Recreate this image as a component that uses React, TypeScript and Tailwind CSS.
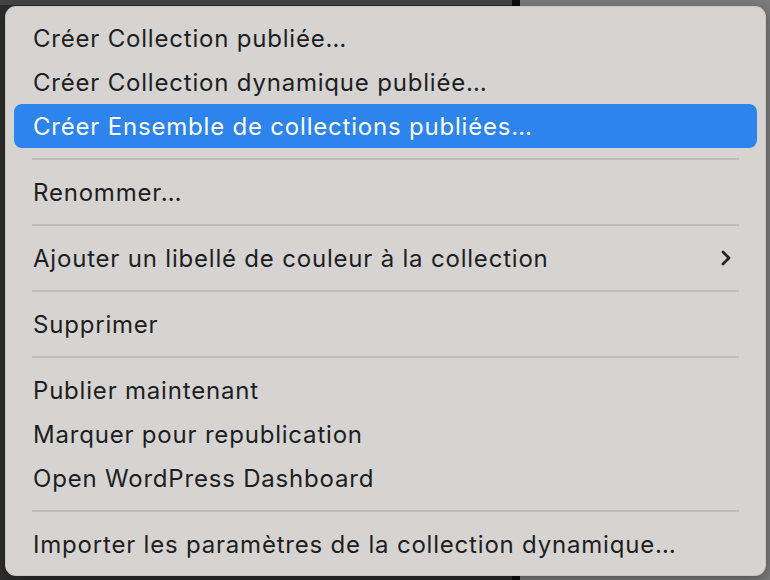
import React from 'react';
import { ChevronRight } from 'lucide-react';

type Entry =
  | { kind: 'item'; label: string; active?: boolean; submenu?: boolean }
  | { kind: 'sep' };

const entries: Entry[] = [
  { kind: 'item', label: 'Créer Collection publiée…' },
  { kind: 'item', label: 'Créer Collection dynamique publiée…' },
  { kind: 'item', label: 'Créer Ensemble de collections publiées…', active: true },
  { kind: 'sep' },
  { kind: 'item', label: 'Renommer…' },
  { kind: 'sep' },
  { kind: 'item', label: 'Ajouter un libellé de couleur à la collection', submenu: true },
  { kind: 'sep' },
  { kind: 'item', label: 'Supprimer' },
  { kind: 'sep' },
  { kind: 'item', label: 'Publier maintenant' },
  { kind: 'item', label: 'Marquer pour republication' },
  { kind: 'item', label: 'Open WordPress Dashboard' },
  { kind: 'sep' },
  { kind: 'item', label: 'Importer les paramètres de la collection dynamique…' },
];

export default function App() {
  return (
    <div
      className="relative w-[770px] h-[580px] overflow-hidden bg-[#2c2c2c] flex"
      style={{ fontFamily: 'Inter, "Noto Sans", "Liberation Sans", sans-serif' }}
    >
      {/* app behind the menu */}
      <div className="w-[512px] h-full bg-[#2e2e2e] border-t-[5px] border-[#444]" />
      <div className="w-[8px] h-full bg-[#0d0d0d]" />
      <div className="flex-1 h-full bg-[#7c7c7c]" />

      {/* context menu */}
      <div className="absolute left-[5px] top-[6px] w-[761px] h-[570px] rounded-[11px] bg-[#d5d4d2] shadow-[0_4px_14px_rgba(0,0,0,0.35)] border border-[#bdbcba]/60 px-[8px] py-[9px] flex flex-col">
        {entries.map((e, i) =>
          e.kind === 'sep' ? (
            <div key={i} className="h-[22px] flex items-center px-[18px]">
              <div className="h-[2px] w-full bg-[#bebdbb]" />
            </div>
          ) : (
            <div
              key={i}
              className={
                'h-[44px] shrink-0 flex items-center justify-between pl-[19px] pr-[19px] rounded-[8px] text-[24px] tracking-[0.8px] ' +
                (e.active ? 'bg-[#2c84ec] text-white' : 'text-[#1e1e1e]')
              }
            >
              <span className="mt-[1px]">{e.label}</span>
              {e.submenu && <ChevronRight size={24} strokeWidth={2.8} className="text-[#222]" />}
            </div>
          )
        )}
      </div>
    </div>
  );
}
